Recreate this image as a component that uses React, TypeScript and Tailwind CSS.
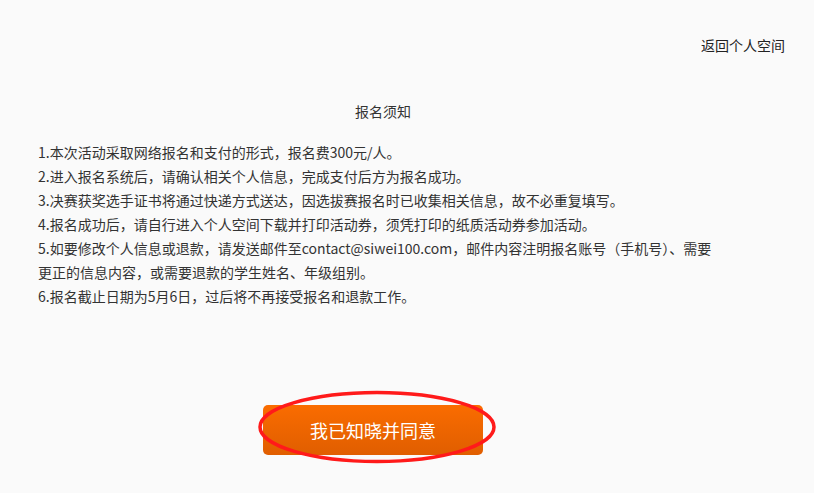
import React from 'react';

const rules = [
  '1.本次活动采取网络报名和支付的形式，报名费300元/人。',
  '2.进入报名系统后，请确认相关个人信息，完成支付后方为报名成功。',
  '3.决赛获奖选手证书将通过快递方式送达，因选拔赛报名时已收集相关信息，故不必重复填写。',
  '4.报名成功后，请自行进入个人空间下载并打印活动券，须凭打印的纸质活动券参加活动。',
  '5.如要修改个人信息或退款，请发送邮件至contact@siwei100.com，邮件内容注明报名账号（手机号）、需要更正的信息内容，或需要退款的学生姓名、年级组别。',
  '6.报名截止日期为5月6日，过后将不再接受报名和退款工作。',
];

const App = () => {
  return (
    <div className="min-h-[493px] w-full bg-[#fafafa] text-[14px] leading-[24px] text-[#333] font-['Noto_Sans_CJK_SC','Noto_Sans',sans-serif]">
      <div className="w-[766px]">
        {/* top link */}
        <div className="flex justify-end pt-[33px]">
          <a href="#" className="mr-[-19px] text-[#222]">返回个人空间</a>
        </div>

        <h3 className="mt-[42px] text-center font-normal">报名须知</h3>

        <div className="mt-[17px] pl-[38px] w-[721px]">
          {rules.map((r) => (
            <p key={r}>{r}</p>
          ))}
        </div>

        {/* confirm button */}
        <div className="relative mt-[97px] ml-[263px] w-[220px]">
          <button className="h-[50px] w-[220px] rounded-[5px] bg-gradient-to-b from-[#fa6c00] to-[#e05e00] text-[18px] text-white">
            我已知晓并同意
          </button>
          <svg
            className="pointer-events-none absolute left-[-5px] top-[-15px]"
            width="242"
            height="78"
            viewBox="0 0 242 78"
          >
            <ellipse cx="119" cy="37" rx="117" ry="34.5" fill="none" stroke="#ff1a1a" strokeWidth="3.5" />
          </svg>
        </div>
      </div>
    </div>
  );
};

export default App;
